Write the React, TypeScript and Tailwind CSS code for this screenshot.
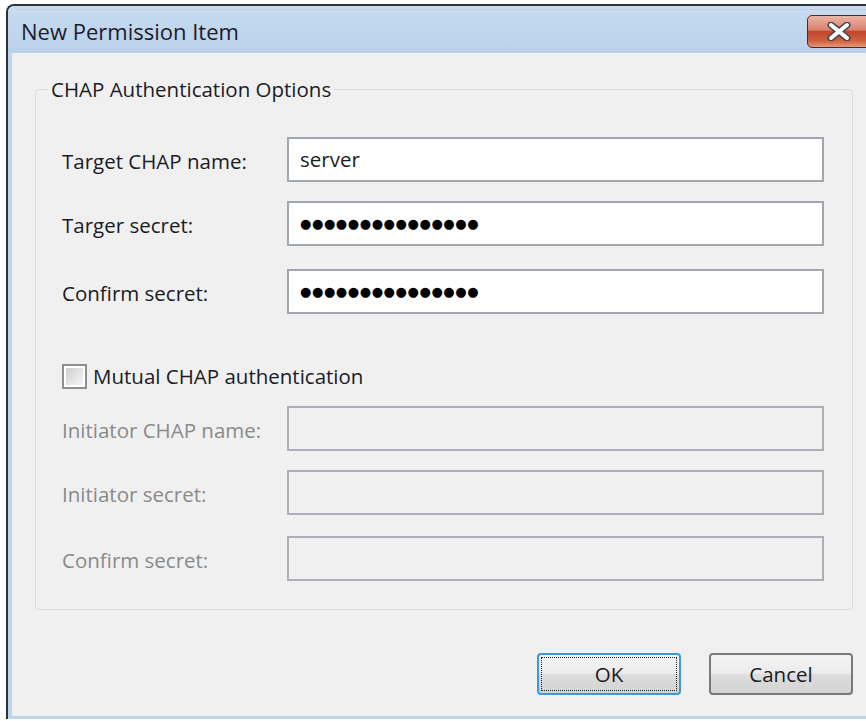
import React from 'react';

const font = "font-['Open_Sans','Noto_Sans',sans-serif]";

const Field = ({ label, value, secret, disabled, className = '' }: { label: string; value?: string; secret?: boolean; disabled?: boolean; className?: string }) => (
  <div className={`flex items-center ${className}`}>
    <div className={`w-[225px] pt-[3px] text-[20.5px] ${disabled ? 'text-[#8a8a8a]' : 'text-[#1b1b24]'}`}>{label}</div>
    <div
      className={`w-[537px] h-[45px] flex items-center px-[11px] border-2 ${
        disabled ? 'bg-[#f0f0f0] border-[#acafb5]' : 'bg-white border-[#a2a6ad]'
      }`}
    >
      {secret ? (
        <span className="font-['DejaVu_Sans',sans-serif] text-[13px] tracking-[0.6px] text-black">{'●'.repeat(15)}</span>
      ) : (
        <span className="text-[20.5px] text-[#1b1b24]">{value}</span>
      )}
    </div>
  </div>
);

const Button = ({ label, focused }: { label: string; focused?: boolean }) => (
  <div
    className={`w-[144px] h-[42px] rounded-[4px] border-2 p-[2px] bg-[linear-gradient(#f4f4f4,#ececec_48%,#dddddd_52%,#d3d3d3)] ${
      focused ? 'border-[#3b9ad9]' : 'border-[#7a7a7a]'
    }`}
  >
    <div
      className={`w-full h-full flex items-center justify-center text-[20.5px] text-[#1b1b24] ${
        focused ? 'border border-dotted border-[#222]' : ''
      }`}
    >
      {label}
    </div>
  </div>
);

export default function App() {
  return (
    <div className={`w-[866px] h-[721px] bg-white overflow-hidden pt-[4px] pl-[6px] ${font}`}>
      <div className="w-[880px] h-[715px] rounded-tl-[8px] border-l-2 border-t-2 border-[#2d3238] bg-[#bdd4eb] flex flex-col">
        {/* title bar */}
        <div className="h-[47px] flex items-start bg-[linear-gradient(#c8dcef,#b9d1ea)] rounded-tl-[6px] relative">
          <div className="absolute left-[10px] right-0 top-[3px] border-t border-dotted border-[#d6b7c4]" />
          <div className="pl-[13px] pt-[9px] text-[22px] text-[#1d1a2c]">New Permission Item</div>
          <div className="flex-1" />
          <div className="mt-[9px] mr-[15px] w-[64px] h-[33px] rounded-[5px] border border-[#5a2326] bg-[linear-gradient(#eab3a6,#d9826e_45%,#c2452c_50%,#d0603f_80%,#e39a78)] flex items-center justify-center">
            <svg width="24" height="19" viewBox="0 0 24 19">
              <path d="M4 3 L20 16 M20 3 L4 16" stroke="#4a4a4a" strokeWidth="7" strokeLinecap="round" />
              <path d="M4 3 L20 16 M20 3 L4 16" stroke="#ffffff" strokeWidth="4" strokeLinecap="round" />
            </svg>
          </div>
        </div>

        {/* client area */}
        <div className="flex-1 ml-[4px] mb-[3px] bg-[#f0f0f0] pt-[36px] pl-[23px]">
          <div className="w-[818px] h-[521px] border border-[#d3dde6] rounded-[4px] relative pt-[47px] pl-[26px]">
            <div className="absolute left-[12px] -top-[16px] px-[3px] bg-[#f0f0f0] text-[20.5px] text-[#1b1b24]">
              CHAP Authentication Options
            </div>
            <Field label="Target CHAP name:" value="server" />
            <Field label="Targer secret:" secret className="mt-[19px]" />
            <Field label="Confirm secret:" secret className="mt-[23px]" />

            <div className="flex items-center mt-[50px] h-[25px]">
              <div className="w-[25px] h-[25px] border-2 border-[#8f8f8f] p-[2px] bg-white">
                <div className="w-full h-full bg-[linear-gradient(135deg,#cfcfcf,#f4f4f4)]" />
              </div>
              <span className="ml-[6px] text-[20.5px] text-[#1b1b24]">Mutual CHAP authentication</span>
            </div>

            <Field label="Initiator CHAP name:" disabled className="mt-[17px]" />
            <Field label="Initiator secret:" disabled className="mt-[19px]" />
            <Field label="Confirm secret:" disabled className="mt-[21px]" />
          </div>

          <div className="flex justify-end gap-[28px] w-[818px] mt-[43px]">
            <Button label="OK" focused />
            <Button label="Cancel" />
          </div>
        </div>
      </div>
    </div>
  );
}
